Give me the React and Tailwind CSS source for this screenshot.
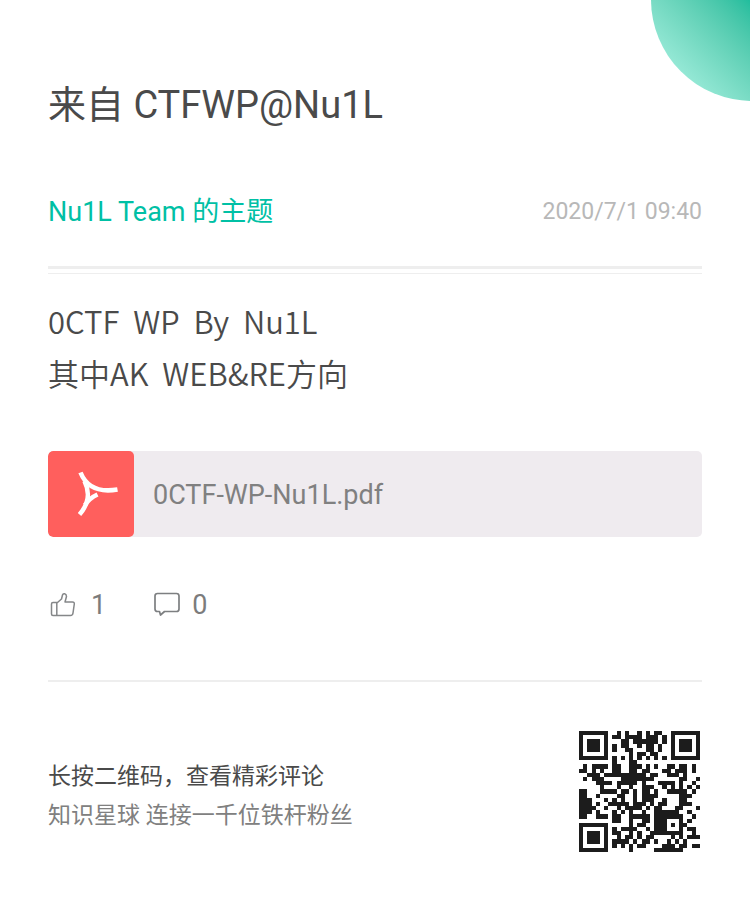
const QR_ROWS = [
  [9, 11, 14, 16, 18, 19],
  [8, 9, 11, 12, 13, 14, 16, 17, 18, 20],
  [10, 11, 13, 14, 15, 16, 17, 18, 20],
  [8, 10, 11, 14, 16, 17, 19],
  [8, 11, 12, 16, 17, 19],
  [12, 14, 15, 17, 18],
  [8, 10, 12, 14, 16, 18, 20],
  [8, 12, 13],
  [1, 3, 4, 5, 6, 8, 9, 12, 13, 14, 16, 18, 21, 22, 24, 25, 27],
  [0, 1, 3, 5, 8, 9, 12, 13, 15, 16, 20, 21, 23, 24, 25, 27],
  [2, 3, 4, 6, 7, 8, 9, 10, 11, 12, 13, 14, 15, 17, 18, 21, 22, 23, 25],
  [1, 3, 4, 5, 10, 11, 12, 13, 14, 15, 16, 17, 24, 25, 28],
  [4, 5, 6, 7, 9, 10, 11, 12, 13, 15, 19, 20, 21, 22, 24, 27],
  [5, 9, 12, 15, 16, 17, 20, 22, 24, 26, 28],
  [0, 1, 5, 6, 7, 8, 10, 11, 13, 15, 16, 18, 21, 22, 23, 24, 25, 27],
  [0, 1, 4, 9, 10, 13, 15, 16, 17, 18, 24, 25, 26],
  [0, 1, 2, 6, 8, 10, 13, 15, 16, 17, 20, 24, 25],
  [0, 1, 2, 4, 7, 8, 9, 10, 11, 13, 14, 15, 17, 19, 20, 24, 25, 26],
  [0, 1, 2, 3, 6, 9, 11, 12, 13, 14, 16, 18, 19, 23, 24, 28],
  [0, 1, 2, 4, 8, 10, 12, 15, 18, 19, 20, 21, 22, 23, 26],
  [0, 1, 4, 5, 6, 8, 9, 12, 13, 14, 15, 16, 18, 19, 20, 21, 22, 23, 24, 27],
  [8, 9, 12, 15, 16, 18, 19, 20, 24, 26],
  [12, 14, 15, 18, 19, 20, 22, 24, 25],
  [8, 10, 11, 12, 13, 16, 18, 19, 20, 24, 26, 27],
  [8, 9, 12, 14, 17, 18, 19, 20, 21, 22, 23, 24, 27],
  [9, 11, 12, 14, 16, 17, 22, 24, 26, 27, 28],
  [8, 9, 10, 11, 13, 15, 16, 18, 21, 23, 25],
  [8, 10, 12, 14, 15, 20, 21, 22, 24, 25, 27, 28],
  [12, 18, 19, 20, 21, 22, 23, 24],
];

function Finder({ x, y }) {
  return (
    <g>
      <rect x={x} y={y} width="7" height="7" />
      <rect x={x + 1} y={y + 1} width="5" height="5" fill="#fff" />
      <rect x={x + 2} y={y + 2} width="3" height="3" />
    </g>
  );
}

function QrCode() {
  return (
    <svg viewBox="0 0 29 29" className="mr-0.5 size-[121px] shrink-0" fill="#1c1c1c" shapeRendering="crispEdges" role="img" aria-label="二维码">
      <Finder x={0} y={0} />
      <Finder x={22} y={0} />
      <Finder x={0} y={22} />
      {QR_ROWS.map((cols, row) =>
        cols.map((col) => <rect key={`${row}-${col}`} x={col} y={row} width="1" height="1" />)
      )}
    </svg>
  );
}

function PdfIcon() {
  return (
    <svg viewBox="0 0 86 86" className="size-full" fill="none" stroke="#fff" strokeWidth="4.600" aria-hidden="true">
      <path d="M32.500 21.500C38 35 49 42 69.500 38.500" />
      <path d="M31.500 63.500C40 54 42.500 42 36.500 30" />
      <path d="M37 54C41 48 44 46 49.500 43.500" />
    </svg>
  );
}

function ThumbIcon() {
  return (
    <svg viewBox="0 0 26 26" className="size-[26px]" fill="none" stroke="#858789" strokeWidth="1.500" strokeLinejoin="round" aria-hidden="true">
      <path d="M3 10.500H7.500L11.500 7L12.500 3C13 1 16.500 1.200 16.500 4.500L15 10H22.500Q24.500 10 24.300 12L23 21Q22.700 23.500 20.500 23.500H3Q1.500 23.500 1.500 22V12Q1.500 10.500 3 10.500ZM6.800 10.500V23.500" />
    </svg>
  );
}

function CommentIcon() {
  return (
    <svg viewBox="0 0 26 26" className="size-[26px]" fill="none" stroke="#7d7f81" strokeWidth="1.700" strokeLinejoin="round" aria-hidden="true">
      <path d="M3.500 1.500H22.500Q25 1.500 25 4V17Q25 19.500 22.500 19.500H10.500L6.500 23L5.500 19.500H3.500Q1 19.500 1 17V4Q1 1.500 3.500 1.500Z" />
    </svg>
  );
}

export default function App() {
  return (
    <main className="relative overflow-hidden bg-white px-12 pt-[81px] pb-12 font-[Roboto,'Noto_Sans_CJK_SC',sans-serif] text-[#4a4a4a]">
      <div className="absolute -top-[102px] -right-[104px] size-[203px] rounded-full bg-linear-to-tr from-[#a0eedd] from-10% to-[#1abc9c] to-50%" />

      <h1 className="text-[38px] leading-12">来自 CTFWP@Nu1L</h1>

      <header className="mt-[65px] flex items-center justify-between leading-9">
        <h2 className="text-[27px] text-[#00c0a5]">Nu1L Team 的主题</h2>
        <time className="text-[23px] text-[#b8b8b8]">2020/7/1 09:40</time>
      </header>

      <div className="mt-9 h-2 border-t-3 border-b border-[#eeeeee]" />

      <p className="mt-[21px] font-['Noto_Sans_CJK_SC',sans-serif] text-[31px] leading-13 font-[350] whitespace-pre">
        {"0CTF  WP  By  Nu1L\n其中AK  WEB&RE方向"}
      </p>

      <a href="#pdf" className="mt-13 flex items-center overflow-hidden rounded-[5px] bg-[#efebef] text-[27px] text-[#808080]">
        <span className="size-[86px] shrink-0 rounded-[5px] bg-[#ff5f5d]">
          <PdfIcon />
        </span>
        <span className="ml-[19px] pt-0.5">0CTF-WP-Nu1L.pdf</span>
      </a>

      <div className="mt-12 flex gap-12 pl-0.5 text-[27px] leading-10 text-[#7c7c7c]">
        <button type="button" aria-label="点赞 1" className="flex items-center gap-[15px]">
          <ThumbIcon />
          <span>1</span>
        </button>
        <button type="button" aria-label="评论 0" className="flex items-center gap-3">
          <CommentIcon />
          <span>0</span>
        </button>
      </div>

      <footer className="mt-[55px] flex items-center justify-between border-t-2 border-[#eeeeee] pt-[49px]">
        <div className="pt-2 text-[23px] leading-[39px]">
          <p>长按二维码，查看精彩评论</p>
          <p className="text-[#808080]">知识星球 连接一千位铁杆粉丝</p>
        </div>
        <QrCode />
      </footer>
    </main>
  );
}
